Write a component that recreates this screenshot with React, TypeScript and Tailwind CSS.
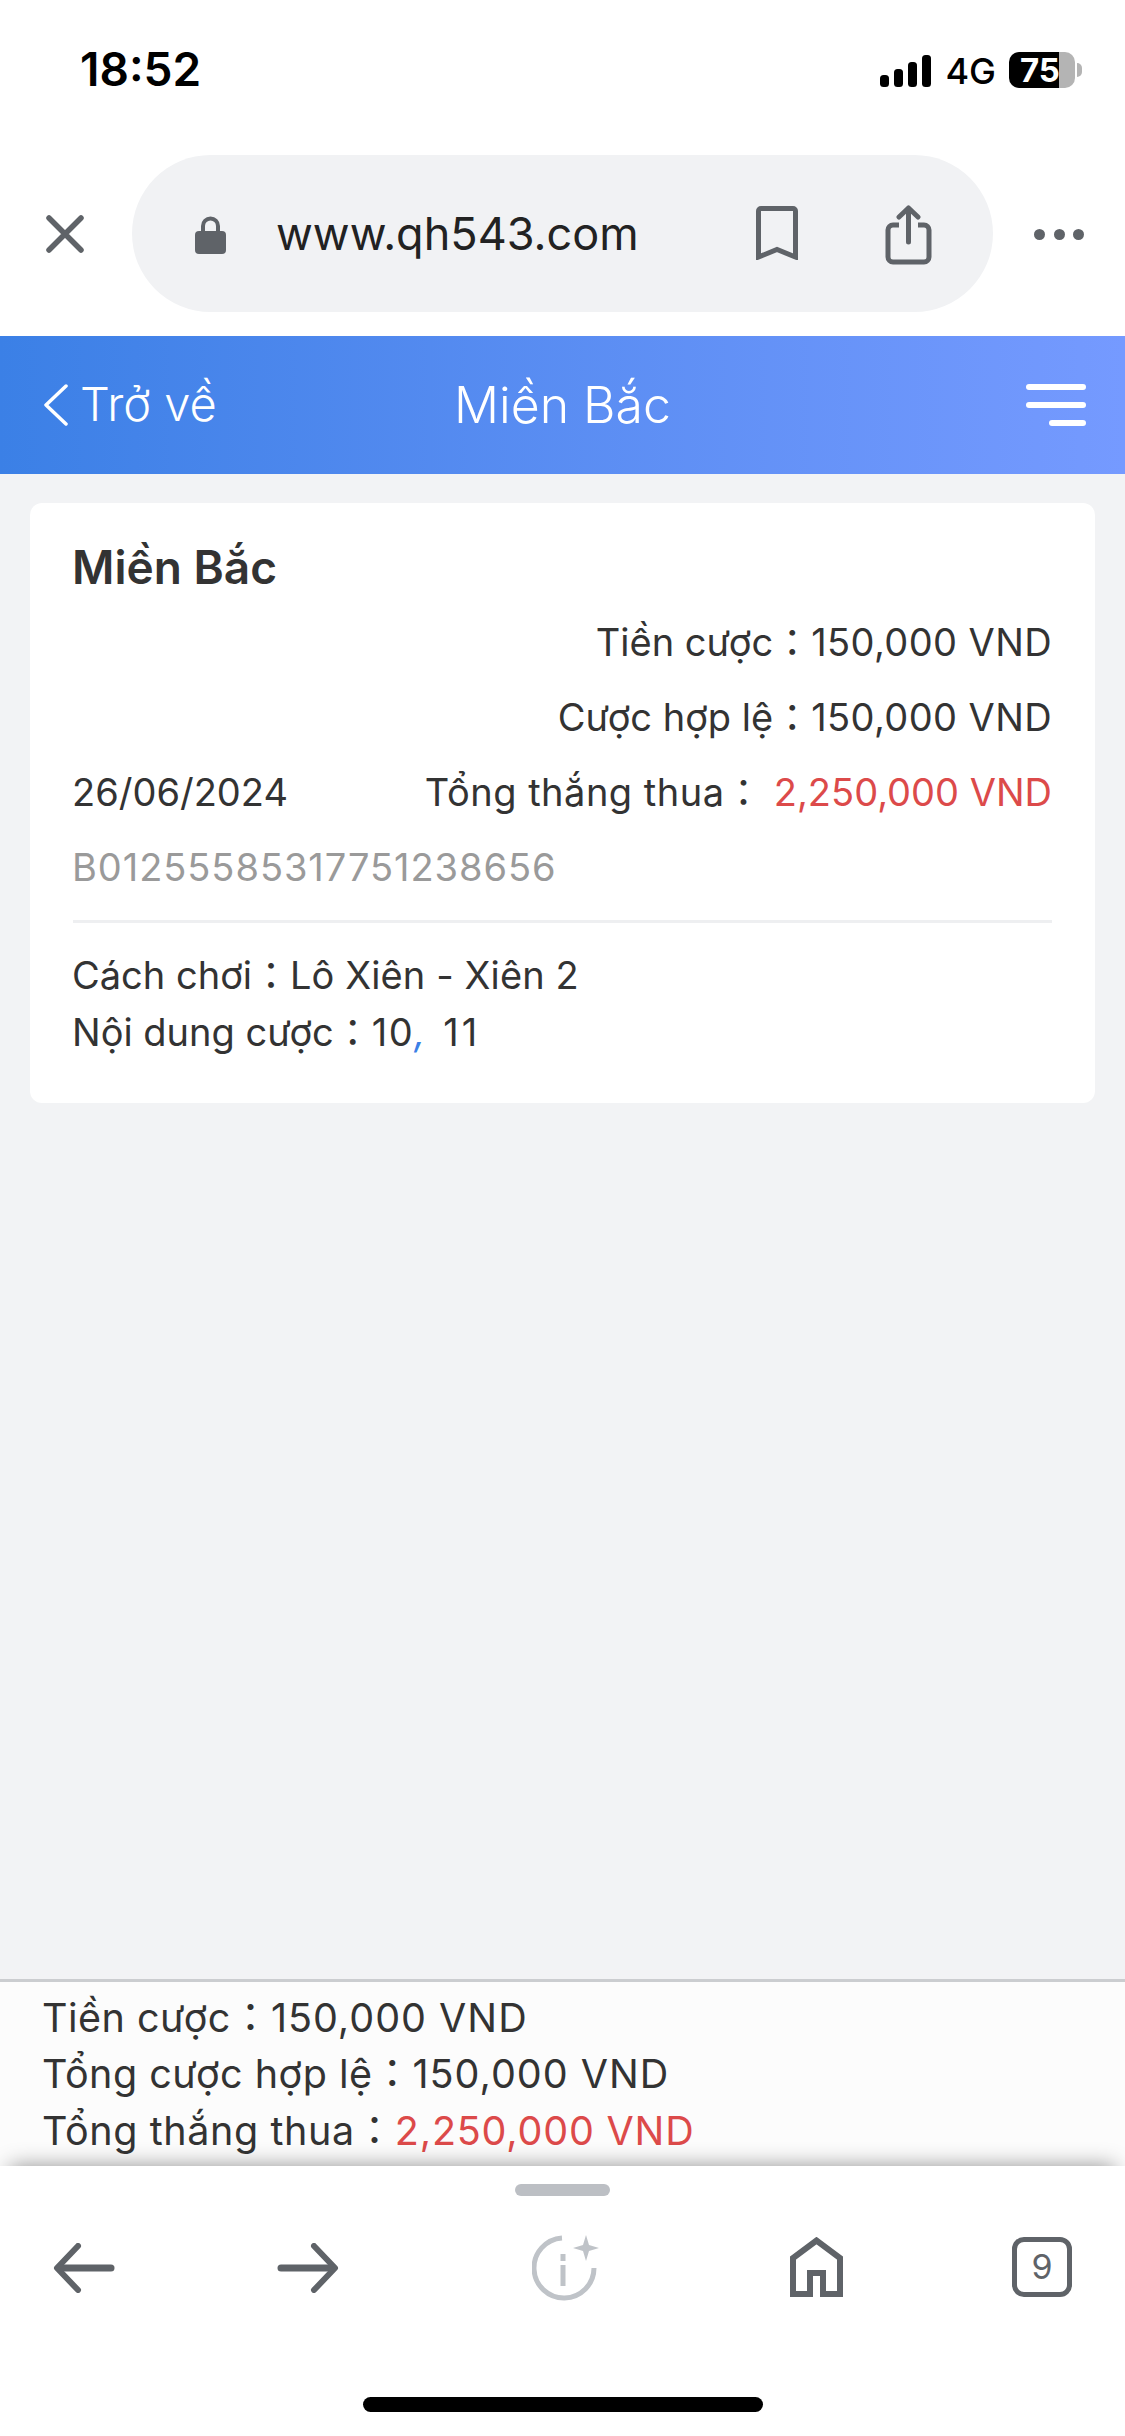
const font = "font-['Inter','Noto_Sans_CJK_TC',sans-serif]";

function StatusBar() {
  return (
    <div className="h-[155px] bg-white flex items-start justify-between pt-[51px] pl-[80px] pr-[43px]">
      <span className="text-[46px] leading-[36px] font-semibold text-black">18:52</span>
      <div className="flex items-center">
        <svg width="51" height="32" viewBox="0 0 51 32" className="mt-[2px]">
          <rect x="0" y="20" width="9" height="12" rx="3.5" fill="#000" />
          <rect x="14" y="14" width="9" height="18" rx="3.5" fill="#000" />
          <rect x="28" y="7" width="9" height="25" rx="3.5" fill="#000" />
          <rect x="42" y="0" width="9" height="32" rx="3.5" fill="#000" />
        </svg>
        <span className="ml-[14px] mt-[2px] text-[36px] leading-[36px] font-medium text-black">4G</span>
        <div className="ml-[13px] relative flex w-[66px] h-[36px]">
          <div className="w-[50px] h-full rounded-l-[10px] bg-black" />
          <div className="w-[16px] h-full rounded-r-[10px] bg-[#b4b4b4]" />
          <span className="absolute left-[11px] top-0 text-[33px] leading-[36px] font-bold text-white">75</span>
        </div>
        <div className="ml-[2px] w-[5px] h-[14px] rounded-r-full bg-[#b4b4b4]" />
      </div>
    </div>
  );
}

function UrlBar() {
  return (
    <div className="h-[181px] bg-white flex items-start pl-[46px]">
      <svg width="38" height="38" viewBox="0 0 38 38" className="mt-[60px]" fill="none" stroke="#5f6368" strokeWidth="5.5" strokeLinecap="round">
        <path d="M3 3 35 35M35 3 3 35" />
      </svg>
      <div className="ml-[48px] w-[861px] h-[157px] rounded-full bg-[#f1f2f4] flex items-center pl-[63px]">
        <svg width="31" height="38" viewBox="0 0 31 38" className="mt-[2px]">
          <path d="M8 17V10a7.5 7.5 0 0 1 15 0v7" fill="none" stroke="#5f6368" strokeWidth="4" />
          <rect x="0" y="15" width="31" height="23" rx="4" fill="#5f6368" />
        </svg>
        <span className="ml-[50px] w-[364px] text-[45px] leading-[52px] text-[#222] whitespace-nowrap">www.qh543.com</span>
        <svg width="42" height="54" viewBox="0 0 42 54" className="ml-[116px] -mt-[1px]" fill="none" stroke="#5f6368" strokeWidth="5">
          <path d="M2.500 51V5a2.500 2.500 0 0 1 2.500-2.500h32A2.500 2.500 0 0 1 39.500 5v46L21 43.500Z" />
        </svg>
        <svg width="47" height="60" viewBox="0 0 47 60" className="ml-[87px] mt-[3px]" fill="none" stroke="#5f6368" strokeWidth="5" strokeLinecap="round" strokeLinejoin="round">
          <path d="M14 20H8a5 5 0 0 0-5 5v27a5 5 0 0 0 5 5h31a5 5 0 0 0 5-5V25a5 5 0 0 0-5-5h-6" strokeLinecap="butt" />
          <path d="M23.500 37V3M14 12l9.500-9 9.500 9" />
        </svg>
      </div>
      <div className="ml-[41px] mt-[74px] flex gap-[8.500px]">
        <span className="w-[11px] h-[11px] rounded-full bg-[#5f6368]" />
        <span className="w-[11px] h-[11px] rounded-full bg-[#5f6368]" />
        <span className="w-[11px] h-[11px] rounded-full bg-[#5f6368]" />
      </div>
    </div>
  );
}

function Header() {
  return (
    <div className="relative h-[138px] bg-gradient-to-r from-[#3b80e6] to-[#759aff] flex items-center pl-[43px] pr-[39px] text-white">
      <svg width="25" height="42" viewBox="0 0 25 42" fill="none" stroke="#fff" strokeWidth="3.500" strokeLinecap="round" strokeLinejoin="round">
        <path d="M23 2 3 21l20 19" />
      </svg>
      <span className="ml-[12px] text-[47px] leading-[52px] font-light -mt-[2px]">Trở về</span>
      <span className="absolute left-0 right-0 text-center text-[50px] leading-[56px] font-light">Miền Bắc</span>
      <div className="ml-auto flex flex-col items-end gap-[12px]">
        <span className="w-[60px] h-[6px] rounded-full bg-white" />
        <span className="w-[60px] h-[6px] rounded-full bg-white" />
        <span className="w-[37px] h-[6px] rounded-full bg-white" />
      </div>
    </div>
  );
}

function BetCard() {
  return (
    <div className="mx-[30px] mt-[29px] h-[600px] rounded-[12px] bg-white px-[43px] pt-[39px] text-[38px] text-[#333]">
      <div className="h-[50px] leading-[50px] text-[46px] font-semibold -ml-[1px]">Miền Bắc</div>
      <div className="mt-[13px] h-[75px] flex items-center justify-end">
        Tiền cược：<span className="tracking-[0.4px]">150,000 VND</span>
      </div>
      <div className="h-[75px] flex items-center justify-end">
        Cược hợp lệ：<span className="tracking-[0.4px]">150,000 VND</span>
      </div>
      <div className="h-[75px] flex items-center justify-between">
        <span className="-ml-[1px]">26/06/2024</span>
        <span>
          <span className="tracking-[0.5px]">Tổng thắng thua：</span> <span className="text-[#dc4a4a]">2,250,000 VND</span>
        </span>
      </div>
      <div className="h-[75px] flex items-center text-[#9a9a9a] tracking-[0.95px] -ml-[1px]">B01255585317751238656</div>
      <div className="mt-[15px] h-[3px] bg-[#eeeff1]" />
      <div className="mt-[24px] h-[57px] flex items-center -ml-[1px]">
        Cách chơi：<span className="tracking-[0.1px]">Lô Xiên - Xiên 2</span>
      </div>
      <div className="h-[57px] flex items-center -ml-[1px]">
        Nội dung cược：<span className="tracking-[1.5px]">10</span>
        <span className="text-[#3b80e6] italic mr-[18px]">,</span>
        <span className="tracking-[3px]">11</span>
      </div>
    </div>
  );
}

function Summary() {
  return (
    <div className="mt-auto h-[187px] border-t-[3px] border-[#cbcdd0] bg-[#fcfcfc] pl-[42px] pt-[8px] text-[39.500px] text-[#333]">
      <div className="h-[56.500px] flex items-center">
        <span className="tracking-[0.5px]">Tiền cược：</span>
        <span className="tracking-[1px]">150,000 VND</span>
      </div>
      <div className="h-[56.500px] flex items-center">
        <span className="tracking-[0.5px]">Tổng cược hợp lệ：</span>
        <span className="tracking-[1px]">150,000 VND</span>
      </div>
      <div className="h-[56.500px] flex items-center">
        <span className="tracking-[0.6px]">Tổng thắng thua：</span>
        <span className="text-[#dc4a4a] tracking-[0.8px]">2,250,000 VND</span>
      </div>
    </div>
  );
}

function Toolbar() {
  return (
    <div className="relative h-[270px] bg-white shadow-[0_-10px_20px_-10px_rgba(0,0,0,0.42)] flex flex-col items-center">
      <div className="mt-[18px] w-[95px] h-[12px] rounded-full bg-[#bcbfc4]" />
      <div className="mt-[39px] w-full flex items-start pl-[53px]">
        <svg width="62" height="50" viewBox="0 0 62 50" className="mt-[8px]" fill="none" stroke="#5f6368" strokeLinecap="round" strokeLinejoin="round">
          <path d="M25 3 4 25l21 22" strokeWidth="6" />
          <path d="M6 25h52" strokeWidth="7" />
        </svg>
        <svg width="62" height="50" viewBox="0 0 62 50" className="ml-[162px] mt-[8px]" fill="none" stroke="#5f6368" strokeLinecap="round" strokeLinejoin="round">
          <path d="M37 3 58 25 37 47" strokeWidth="6" />
          <path d="M56 25H4" strokeWidth="7" />
        </svg>
        <svg width="69" height="66" viewBox="0 0 69 66" className="ml-[193px]" fill="none" stroke="#bfc3c8">
          <path d="M30 3A30 30 0 1 0 62 33" strokeWidth="5" />
          <path d="M31 19v7M31 30v21" strokeWidth="5" />
          <path d="M54 0l3 10 10 3-10 3-3 10-3-10-10-3 10-3Z" fill="#bfc3c8" stroke="none" />
        </svg>
        <svg width="53" height="60" viewBox="0 0 53 60" className="ml-[189px] mt-[2px]" fill="none" stroke="#5f6368" strokeWidth="6">
          <path d="M3 57V21L26.500 3.500 50 21V57H33V36H20V57Z" />
        </svg>
        <div className="ml-[169px] mt-[2px] w-[60px] h-[60px] rounded-[12px] border-[5px] border-[#5f6368] flex items-center justify-center text-[34px] leading-none text-[#5f6368]">
          9
        </div>
      </div>
      <div className="absolute left-[363px] bottom-[24px] w-[400px] h-[15px] rounded-full bg-black" />
    </div>
  );
}

export default function App() {
  return (
    <div className={`w-[1125px] h-[2436px] flex flex-col overflow-hidden bg-[#f2f3f5] ${font}`}>
      <StatusBar />
      <UrlBar />
      <Header />
      <BetCard />
      <Summary />
      <Toolbar />
    </div>
  );
}
